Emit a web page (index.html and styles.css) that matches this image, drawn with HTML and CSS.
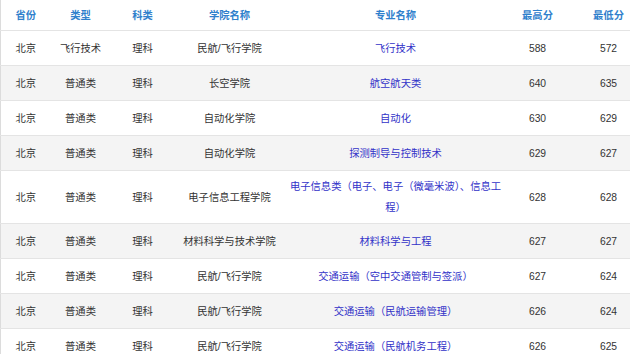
FILE: index.html
```html
<!DOCTYPE html>
<html lang="zh-CN">
<head>
<meta charset="utf-8">
<title>分数</title>
<link rel="stylesheet" href="styles.css">
</head>
<body>
<table class="score-table">
  <colgroup>
    <col class="c-prov"><col class="c-type"><col class="c-sub"><col class="c-col"><col class="c-major"><col class="c-max"><col class="c-min">
  </colgroup>
  <thead>
    <tr><th>省份</th><th>类型</th><th>科类</th><th>学院名称</th><th>专业名称</th><th>最高分</th><th>最低分</th></tr>
  </thead>
  <tbody>
    <tr><td>北京</td><td>飞行技术</td><td>理科</td><td>民航/飞行学院</td><td><a class="major">飞行技术</a></td><td>588</td><td>572</td></tr>
    <tr><td>北京</td><td>普通类</td><td>理科</td><td>长空学院</td><td><a class="major">航空航天类</a></td><td>640</td><td>635</td></tr>
    <tr><td>北京</td><td>普通类</td><td>理科</td><td>自动化学院</td><td><a class="major">自动化</a></td><td>630</td><td>629</td></tr>
    <tr><td>北京</td><td>普通类</td><td>理科</td><td>自动化学院</td><td><a class="major">探测制导与控制技术</a></td><td>629</td><td>627</td></tr>
    <tr><td>北京</td><td>普通类</td><td>理科</td><td>电子信息工程学院</td><td><a class="major">电子信息类（电子、电子（微毫米波）、信息工程）</a></td><td>628</td><td>628</td></tr>
    <tr><td>北京</td><td>普通类</td><td>理科</td><td>材料科学与技术学院</td><td><a class="major">材料科学与工程</a></td><td>627</td><td>627</td></tr>
    <tr><td>北京</td><td>普通类</td><td>理科</td><td>民航/飞行学院</td><td><a class="major">交通运输（空中交通管制与签派）</a></td><td>627</td><td>624</td></tr>
    <tr><td>北京</td><td>普通类</td><td>理科</td><td>民航/飞行学院</td><td><a class="major">交通运输（民航运输管理）</a></td><td>626</td><td>624</td></tr>
    <tr><td>北京</td><td>普通类</td><td>理科</td><td>民航/飞行学院</td><td><a class="major">交通运输（民航机务工程）</a></td><td>626</td><td>625</td></tr>
  </tbody>
</table>
</body>
</html>
```

FILE: styles.css
```css
html, body {
  margin: 0;
  padding: 0;
  background: #fff;
  overflow: hidden;
}

.score-table {
  table-layout: fixed;
  width: 648px;
  border-collapse: collapse;
  border-left: 1px solid #dcdcdc;
  font-family: "Liberation Sans", "Noto Sans CJK SC", sans-serif;
  font-size: 10.3px;
  color: #333;
}

.c-prov { width: 50px; }
.c-type { width: 60px; }
.c-sub { width: 64px; }
.c-col { width: 110px; }
.c-major { width: 222px; }
.c-max { width: 62px; }
.c-min { width: 80px; }

.score-table th {
  height: 30px;
  padding: 0;
  text-align: center;
  vertical-align: middle;
  font-weight: bold;
  color: #2f80cc;
  border-bottom: 1px solid #e4e4e4;
  line-height: 21px;
}

.score-table td {
  height: 35px;
  padding: 5px 0;
  box-sizing: border-box;
  text-align: center;
  vertical-align: middle;
  line-height: 21px;
  border-bottom: 1px solid #e4e4e4;
}

.score-table tbody tr:nth-child(even) td {
  background: #f4f4f4;
}

.major {
  color: #3232c8;
  text-decoration: none;
}
```
